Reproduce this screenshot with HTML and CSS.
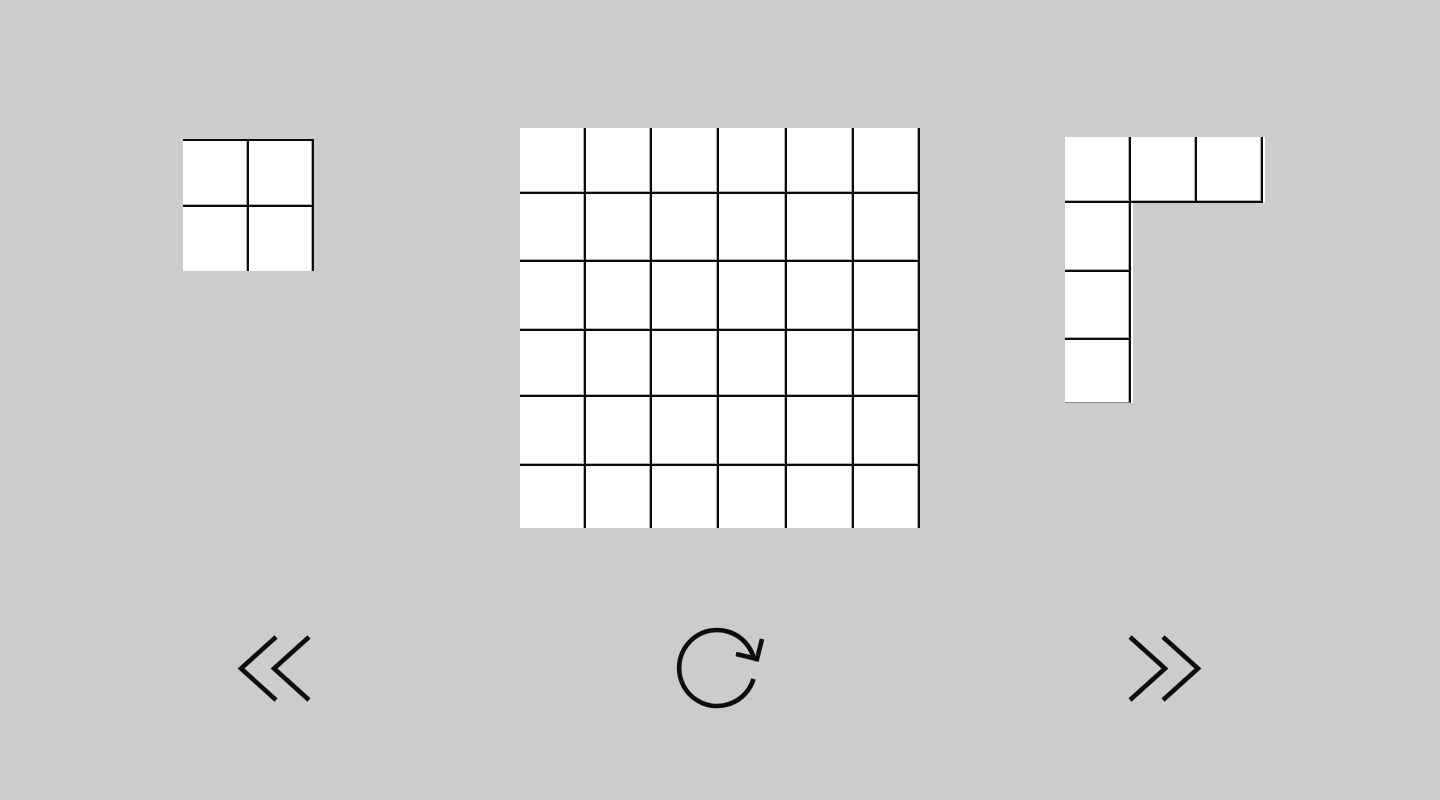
FILE: index.html
```html
<!DOCTYPE html>
<html lang="en">
<head>
<meta charset="utf-8">
<title>Grid puzzle</title>
<link rel="stylesheet" href="styles.css">
</head>
<body>
<main class="game">
  <section class="boards">
    <div class="board board-small">
      <i class="cell cell-lined-top"></i><i class="cell cell-lined-top"></i>
      <i class="cell"></i><i class="cell"></i>
    </div>
    <div class="board board-large">
      <i class="cell"></i><i class="cell"></i><i class="cell"></i><i class="cell"></i><i class="cell"></i><i class="cell"></i>
      <i class="cell"></i><i class="cell"></i><i class="cell"></i><i class="cell"></i><i class="cell"></i><i class="cell"></i>
      <i class="cell"></i><i class="cell"></i><i class="cell"></i><i class="cell"></i><i class="cell"></i><i class="cell"></i>
      <i class="cell"></i><i class="cell"></i><i class="cell"></i><i class="cell"></i><i class="cell"></i><i class="cell"></i>
      <i class="cell"></i><i class="cell"></i><i class="cell"></i><i class="cell"></i><i class="cell"></i><i class="cell"></i>
      <i class="cell"></i><i class="cell"></i><i class="cell"></i><i class="cell"></i><i class="cell"></i><i class="cell"></i>
    </div>
    <div class="board board-corner">
      <i class="cell"></i><i class="cell"></i><i class="cell cell-edge"></i>
      <i class="cell cell-edge"></i><i class="gap"></i><i class="gap"></i>
      <i class="cell cell-edge"></i><i class="gap"></i><i class="gap"></i>
      <i class="cell cell-edge cell-last"></i><i class="gap"></i><i class="gap"></i>
    </div>
  </section>
  <nav class="controls">
    <button class="control control-prev" type="button" aria-label="Previous">
      <svg viewBox="235 630 80 80" width="80" height="80"><path d="M276 637 241 668.500 276 700M309 637 274 668.500 309 700"/></svg>
    </button>
    <button class="control control-reset" type="button" aria-label="Reset">
      <svg viewBox="670 620 100 100" width="100" height="100"><path d="M753.500 679A38 38 0 1 1 753.500 657L757 660"/><path d="M762 639 757 659 736 654"/></svg>
    </button>
    <button class="control control-next" type="button" aria-label="Next">
      <svg viewBox="1125 630 80 80" width="80" height="80"><path d="M1130 637 1165 668.500 1130 700M1163 637 1198 668.500 1163 700"/></svg>
    </button>
  </nav>
</main>
</body>
</html>
```
FILE: styles.css
```css
html, body { margin: 0; padding: 0; }
body { width: 1440px; height: 800px; overflow: hidden; background: #cccccc; }
.game { display: flex; flex-direction: column; height: 800px; }
.boards { display: flex; align-items: flex-start; height: 588px; padding: 128px 0 0 183px; box-sizing: border-box; }
.board { display: grid; }
.cell { display: block; background: #fff; border-right: 2px solid #0a0a0a; border-bottom: 2px solid #0a0a0a; box-sizing: border-box; box-shadow: inset -1px -1px 0 #b0b0b0; }
.board-small { grid-template-columns: 66px 65px; grid-template-rows: 68px 64px; margin-top: 11px; }
.board-small .cell:nth-child(n+3) { border-bottom: 0; box-shadow: inset -1px 0 0 #b0b0b0; }
.cell-lined-top { border-top: 2px solid #0a0a0a; }
.board-large { grid-template-columns: 66px 66px 67px 68px 67px 66px; grid-template-rows: 66px 68px 69px 66px 69px 62px; margin-left: 206px; }
.board-large .cell:nth-child(n+31) { border-bottom: 0; box-shadow: inset -1px 0 0 #b0b0b0; }
.board-corner { grid-template-columns: 66px 66px 66px; grid-template-rows: 66px 69px 68px 63px; margin-left: 145px; margin-top: 9px; }
.cell-edge { box-shadow: inset -1px -1px 0 #b0b0b0, 2px 0 0 #fff; }
.cell-last { border-bottom: 1px solid #888; box-shadow: inset -1px 0 0 #b0b0b0, 2px 0 0 #fff; }
.controls { display: flex; align-items: flex-start; padding: 42px 0 0 235px; }
.control { display: block; padding: 0; border: 0; background: none; }
.control svg { display: block; fill: none; stroke: #0d0d0d; stroke-width: 4.600; stroke-linecap: butt; stroke-linejoin: miter; filter: blur(0.7px); }
.control-reset { margin-left: 355px; margin-top: -10px; }
.control-next { margin-left: 355px; }
```
